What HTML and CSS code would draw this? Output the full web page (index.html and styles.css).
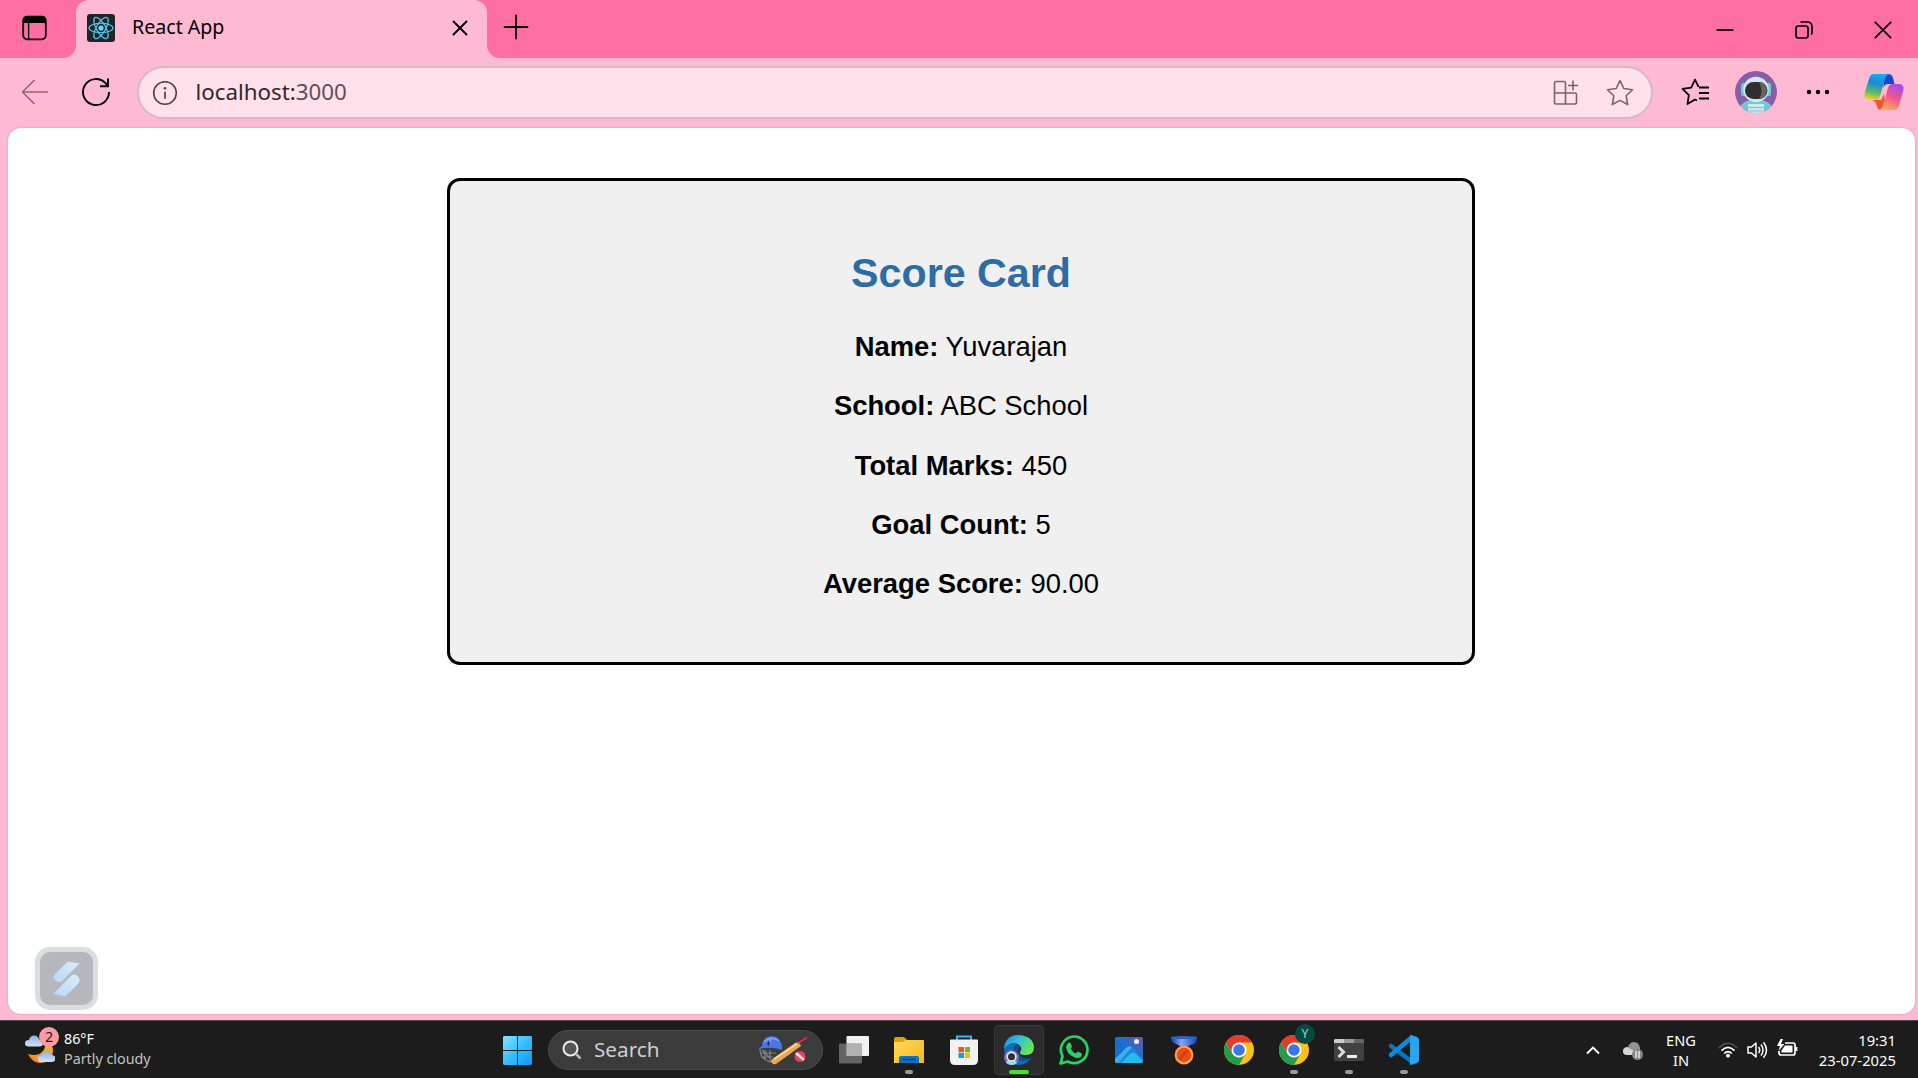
FILE: index.html
```html
<!DOCTYPE html>
<html lang="en">
<head>
<meta charset="utf-8">
<title>React App</title>
<link rel="stylesheet" href="styles.css">
</head>
<body>
<div class="desktop">
  <header class="tabstrip">
    <div class="tab-actions">
      <svg width="26" height="26" viewBox="0 0 26 26"><rect x="1.2" y="1.7" width="22.6" height="22.6" rx="4" fill="none" stroke="#000" stroke-width="1.8"/><path d="M1 8V5q0-4 4-4h15q4 0 4 4v3z"/><path d="M6.6 7v17" stroke="#000" stroke-width="1.4"/></svg>
    </div>
    <div class="tab">
      <svg class="favicon" width="28" height="28" viewBox="0 0 28 28"><rect width="28" height="28" rx="3" fill="#20232a"/><g fill="none" stroke="#53c1de" stroke-width="1.3"><ellipse cx="14" cy="14" rx="12" ry="4.6"/><ellipse cx="14" cy="14" rx="12" ry="4.6" transform="rotate(60 14 14)"/><ellipse cx="14" cy="14" rx="12" ry="4.6" transform="rotate(120 14 14)"/></g><circle cx="14" cy="14" r="2.6" fill="#61dafb"/></svg>
      <span class="tab-title">React App</span>
      <svg class="tab-close" width="16" height="16" viewBox="0 0 16 16"><path d="M1.5 1.5l13 13M14.5 1.5l-13 13" stroke="#000" stroke-width="1.9" stroke-linecap="round"/></svg>
    </div>
    <svg class="new-tab" width="26" height="26" viewBox="0 0 26 26"><path d="M13 1.5v23M1.5 13h23" stroke="#000" stroke-width="1.8" stroke-linecap="round"/></svg>
    <div class="window-controls">
      <svg width="18" height="18" viewBox="0 0 18 18"><path d="M.5 9h17" stroke="#000" stroke-width="1.8"/></svg>
      <svg width="18" height="18" viewBox="0 0 18 18"><g fill="none" stroke="#000" stroke-width="1.7"><rect x="1" y="5" width="12" height="12" rx="2.2"/><path d="M5.500 1H12q5 0 5 5v5.500q0 1-.8 2"/></g></svg>
      <svg width="18" height="18" viewBox="0 0 18 18"><path d="M.8.8l16.400 16.400M17.200.8L.8 17.200" stroke="#000" stroke-width="1.7"/></svg>
    </div>
  </header>

  <nav class="toolbar">
    <svg class="back" width="28" height="28" viewBox="0 0 28 28"><path d="M27 14H1.500M13.500 2L1.500 14l12 12" fill="none" stroke="#916878" stroke-width="1.600"/></svg>
    <svg class="reload" width="30" height="30" viewBox="0 0 30 30"><path d="M28 15A13 13 0 1 1 24.500 6.200L27 8.800M27 1.500v7.700h-8" fill="none" stroke="#000" stroke-width="1.900"/></svg>
    <div class="address">
      <svg width="26" height="26" viewBox="0 0 26 26"><circle cx="13" cy="13" r="11.300" fill="none" stroke="#4d4147" stroke-width="1.600"/><circle cx="13" cy="8.300" r="1.300" fill="#4d4147"/><path d="M13 11.800v7" stroke="#4d4147" stroke-width="1.700"/></svg>
      <span class="url">localhost:<span class="port">3000</span></span>
      <svg class="apps" width="26" height="26" viewBox="0 0 26 26"><g fill="none" stroke="#76666d" stroke-width="1.600"><path d="M3 1.500h8q1.500 0 1.500 1.500v10h9.500q1.500 0 1.500 1.500v8q0 1.500-1.500 1.500H3q-1.500 0-1.500-1.500V3q0-1.500 1.500-1.500zM1.500 13h11v11M20 .5v10M15 5.500h10"/></g></svg>
      <svg class="star" width="28" height="28" viewBox="0 0 28 28"><path d="M14 1.600l3.800 7.900 8.700 1.200-6.300 6.100 1.500 8.700-7.700-4.100-7.700 4.100 1.500-8.700-6.300-6.100 8.700-1.200z" fill="none" stroke="#76666d" stroke-width="1.600" stroke-linejoin="round"/></svg>
    </div>
    <svg class="favorites" width="29" height="28" viewBox="0 0 29 28"><path d="M16 22.500l-2-1-7.500 4.500 1.400-8.900-6.400-6.300 8.700-1.200L14 1.600l3.600 7.300M18 9.500h10M18 15h10M18 20.500h10" fill="none" stroke="#000" stroke-width="1.800" stroke-linejoin="round"/></svg>
    <svg class="avatar" width="42" height="42" viewBox="0 0 42 42"><defs><clipPath id="face"><circle cx="21" cy="21" r="21"/></clipPath></defs><g clip-path="url(#face)"><rect width="42" height="42" fill="#8560aa"/><path d="M4 42q0-11 12-13h10q12 2 12 13z" fill="#70c8d8"/><rect x="6" y="12" width="30" height="13" rx="2" fill="#70c8d8"/><circle cx="21" cy="18.500" r="12.800" fill="#cceaf0"/><rect x="10" y="11" width="22.500" height="17" rx="8.500" fill="#302f2e"/><path d="M24 11q7.800 0 7.800 8.500T24 28q5-8 0-17" fill="#686461"/><path d="M13 33h16v9H13z" fill="#cceaf0"/><path d="M13 36.500h16M13 40h16" stroke="#70c8d8"/></g></svg>
    <svg class="more" width="24" height="6" viewBox="0 0 24 6"><circle cx="3" cy="3" r="2.200"/><circle cx="12" cy="3" r="2.200"/><circle cx="21" cy="3" r="2.200"/></svg>
    <svg class="copilot" width="40" height="38" viewBox="0 0 40 38"><defs><linearGradient id="cp1" x1=".5" y1="0" x2=".3" y2="1"><stop offset="0" stop-color="#18a8ee"/><stop offset=".35" stop-color="#168ed4"/><stop offset=".7" stop-color="#5bb86a"/><stop offset="1" stop-color="#ffd21b"/></linearGradient><linearGradient id="cp2" x1=".7" y1="0" x2=".3" y2="1"><stop offset="0" stop-color="#a44cec"/><stop offset=".5" stop-color="#f2568d"/><stop offset="1" stop-color="#ffad55"/></linearGradient></defs><path d="M20 1h4q4 0 5 4l1.500 6h-6q-4 0-5 4z" fill="#1748c8"/><path d="M9 27h8l3-6 2 14-2 2h-3q-3 0-4-3l-1-4z" fill="#ed5935"/><path d="M10 1h15q-3 1-4 5l-5 17q-1 4-5 4H5q-6 0-4-8L5 6q1-5 5-5z" fill="url(#cp1)"/><path d="M30 37H15q3-1 4-5l5-17q1-4 5-4h6q6 0 4 8l-4 13q-1 5-5 5z" fill="url(#cp2)"/></svg>
  </nav>

  <main class="viewport">
    <section class="card">
      <h2>Score Card</h2>
      <p><b>Name:</b> Yuvarajan</p>
      <p><b>School:</b> ABC School</p>
      <p><b>Total Marks:</b> 450</p>
      <p><b>Goal Count:</b> 5</p>
      <p><b>Average Score:</b> 90.00</p>
    </section>
    <div class="floating">
      <svg width="27" height="36" viewBox="0 0 27 36"><defs><linearGradient id="fl" x1="1" y1="0" x2="0" y2="1"><stop offset="0" stop-color="#dcecfa"/><stop offset="1" stop-color="#b8d8f8"/></linearGradient></defs><path d="M15 .5l11.500 2L9 20q-3 2-6 0-4-3-1-7z" fill="url(#fl)"/><path d="M12 35.500l-11.500-3L18 15q3-3 6.500 0 4 4 0 8.500z" fill="url(#fl)"/></svg>
    </div>
  </main>

  <footer class="taskbar">
    <div class="weather">
      <div class="weather-icon">
        <svg width="30" height="30" viewBox="0 0 30 30"><defs><linearGradient id="moon" x2="0" y2="1"><stop offset="0" stop-color="#f2c52e"/><stop offset="1" stop-color="#f27c1e"/></linearGradient><linearGradient id="cloud" x2="0" y2="1"><stop offset="0" stop-color="#8daee8"/><stop offset="1" stop-color="#d2e2fb"/></linearGradient></defs><path d="M20 9q8 0 8 8 0 10-11 12-9 1-14-9 10 3 15-3 3-4 2-8z" fill="url(#moon)"/><path id="cl" d="M4 12.500q-4 0-4-3.200Q0 6 4 6q1-4.500 5-4.500t5 4q4 0 4 3.700 0 3.300-4 3.300z" fill="url(#cloud)"/><use href="#cl" x="12.500" y="15.500"/></svg>
        <span class="badge">2</span>
      </div>
      <div class="weather-text"><span>86°F</span><span class="dim">Partly cloudy</span></div>
    </div>

    <div class="apps-row">
      <div class="app start"><svg width="29" height="29" viewBox="0 0 29 29"><defs><linearGradient id="win" x2="1" y2="1"><stop offset="0" stop-color="#83e3ff"/><stop offset=".5" stop-color="#37bfff"/><stop offset="1" stop-color="#0f95f5"/></linearGradient></defs><path d="M1 0h13v14H0V1zM15 0h13l1 1v13H15zM0 15h14v14H1l-1-1zM15 15h14v13l-1 1H15z" fill="url(#win)"/></svg></div>
      <div class="search">
        <svg width="20" height="20" viewBox="0 0 20 20"><circle cx="8.500" cy="8.500" r="7" fill="#555" stroke="#ececec" stroke-width="2"/><path d="M13.500 13.500l5 5" stroke="#bbb" stroke-width="2.500"/></svg>
        <span>Search</span>
        <svg class="cricket" width="50" height="30" viewBox="0 0 50 30"><g fill="none" stroke="#85828f" stroke-width="1.200"><path d="M2 14q0 10 10 13l6-1 3-6M2 18h16M3 22h12M7 15v9M12 15v12M4 15l8 8"/></g><path d="M1 13l3-2Q5 1 14 1q9 1 10 11v3Q13 11 1 14z" fill="#4777e4"/><path d="M6 7q7-7 15-1M11 9l2-5" fill="none" stroke="#80a6fa" stroke-width="1.500"/><path d="M11 6.500l-1 4" stroke="#1c2b60" stroke-width="1.800"/><path d="M13 25L37 8q3-2 5 1l1 2-25 18q-5 1-5-4z" fill="#e9a653"/><path d="M16 24L39 9" stroke="#ffd194" stroke-width="2"/><path d="M40 8l9-5.500" stroke="#e52a4d" stroke-width="2"/><circle cx="42" cy="21.500" r="5.500" fill="#ed3e5b"/><path d="M38 18l8 7" stroke="#ffe0e8" stroke-width="2.500"/></svg>
      </div>
      <div class="app"><svg width="30" height="30" viewBox="0 0 30 30"><rect x="7.500" y="1" width="22.500" height="20" rx="1" fill="#f0f0f0"/><rect y="8.500" width="23" height="20" rx="1" fill="#777" fill-opacity=".8"/><path d="M7.500 8.500H22q1 0 1 1V21H7.500z" fill="#b2b2b2"/></svg></div>
      <div class="app open"><svg width="30" height="30" viewBox="0 0 30 30"><defs><linearGradient id="fold" x2="1" y2="1"><stop offset="0" stop-color="#ffdb64"/><stop offset="1" stop-color="#f9b713"/></linearGradient></defs><path d="M0 4q0-2 2-2h8l3 3v4H0z" fill="#dfa105"/><path d="M0 7h9l3-2h17q1 0 1 1v22H0z" fill="url(#fold)"/><path d="M5 28v-5q0-2 2-2h16q2 0 2 2v5z" fill="#0c72c8"/><path d="M8.500 24.500h13" stroke="#07427e" stroke-width="1.500"/></svg></div>
      <div class="app"><svg width="30" height="30" viewBox="0 0 30 30"><path d="M8 6V1.500h14V6" fill="none" stroke="#31b9f4" stroke-width="2"/><path d="M1 5.500q0-1 1-1h26q1 0 1 1V25q0 5-5 5H6q-5 0-5-5z" fill="#f2f2f2"/><path fill="#f25022" d="M9.500 12h5.500v5.300H9.500z"/><path fill="#7fba00" d="M16 12h5v5.300h-5z"/><path fill="#00a4ef" d="M9.500 18h5.500v5H9.500z"/><path fill="#ffb900" d="M16 18h5v5h-5z"/></svg></div>
      <div class="app open active"><svg width="30" height="30" viewBox="0 0 30 30"><defs><linearGradient id="edge" x2="1" y2=".5"><stop offset="0" stop-color="#158dd4"/><stop offset=".5" stop-color="#35bfd8"/><stop offset="1" stop-color="#67e650"/></linearGradient></defs><path d="M0 14Q1 0 15 0q14 1 15 12 0 8-8 8-7 0-6-3 3-4-1-7Q8 5 0 14z" fill="url(#edge)"/><path d="M0 14Q6 6 13 9q-5 4-3 11 4 9 17 3-4 7-13 7Q1 29 0 14z" fill="#0c6fbd"/><path d="M13 10q-6 5-3 11 5 8 17 3l1-1q-9 2-13-4-2-4 1-7z" fill="#124e93"/><circle cx="7.500" cy="22.500" r="7.500" fill="#896aad"/><path d="M2 28q0-3 5.500-3t5.500 3q-5 4-11 0z" fill="#94dce8"/><circle cx="7.500" cy="21.500" r="5.200" fill="#d4edf1"/><circle cx="7.500" cy="21.800" r="3.500" fill="#302d33"/></svg></div>
      <div class="app"><svg width="30" height="30" viewBox="0 0 30 30"><path d="M1.500 28.500l2-7.300A13.300 13.300 0 1 1 8.800 26.500z" fill="none" stroke="#25d366" stroke-width="2.700" stroke-linejoin="round"/><path d="M8 9.500q1.700-3 3.500-1.500l1.500 3.500-1.400 2.300q1.900 3.600 5.300 4.800l2-2 3.600 1.700q1 .6 0 2.700-2 3-6.200 1.800Q9 20 7.300 13.500q-.5-2 .7-4z" fill="#25d366"/></svg></div>
      <div class="app"><svg width="28" height="26" viewBox="0 0 28 26"><defs><linearGradient id="photo" x1="0" y1="1" x2="1" y2="0"><stop offset="0" stop-color="#126ad1"/><stop offset=".5" stop-color="#176fd0"/><stop offset="1" stop-color="#7155a5"/></linearGradient><linearGradient id="hill" x2="1" y2="1"><stop offset="0" stop-color="#58dcfa"/><stop offset="1" stop-color="#167fd4"/></linearGradient></defs><rect width="28" height="26" rx="2" fill="url(#photo)"/><path d="M0 25L12 11q3-3 6 0l10 12v1q0 2-2 2H2q-2 0-2-1z" fill="#2180e1"/><path d="M0 22L11 11q3-3 6-1L4 26H2q-2 0-2-2z" fill="url(#hill)"/><path d="M6 26l9-9q3-3 6 0l7 7-2 2z" fill="#22bdeb"/><circle cx="21.500" cy="4.500" r="2.500" fill="#e9f1ff"/></svg></div>
      <div class="app"><svg width="28" height="30" viewBox="0 0 28 30"><defs><linearGradient id="rib" x2="1"><stop offset="0" stop-color="#123c9c"/><stop offset=".4" stop-color="#88a6f8"/><stop offset="1" stop-color="#173fbc"/></linearGradient></defs><path d="M2 1.500h24q1 0 1 2 0 5-5 6l-5 2h-6l-6-3Q1 7 1 3 1 1.500 2 1.500z" fill="url(#rib)"/><path d="M1.500 3h25" stroke="#1768d9" stroke-width="2"/><circle cx="14" cy="20" r="8.300" fill="#e65111" stroke="#ff9b4e" stroke-width="2.200"/><path d="M9.500 24l8-8.500" stroke="#d0400f" stroke-width="3"/></svg></div>
      <div class="app"><svg width="30" height="30" viewBox="0 0 30 30"><g id="chrome"><circle cx="15" cy="15" r="15" fill="#fbc116"/><path d="M2 7.500A15 15 0 0 1 28 7.500H15L8.500 18.800z" fill="#e33b2e"/><path d="M2 7.500A15 15 0 0 0 15 30l6.500-11.200h-13z" fill="#249b50"/><circle cx="15" cy="15" r="7.500" fill="#fff"/><circle cx="15" cy="15" r="5.800" fill="#3b78e7"/></g></svg></div>
      <div class="app open"><svg width="30" height="30" viewBox="0 0 30 30"><use href="#chrome"/></svg><span class="profile">Y</span></div>
      <div class="app open"><svg width="30" height="22" viewBox="0 0 30 22"><rect width="30" height="22" rx="1.500" fill="#414141"/><path d="M1 0h9v4H0V1z" fill="#ccc"/><path d="M10 0h10v4H10z" fill="#9b9b9b"/><path d="M20 0h9l1 1v3H20z" fill="#666"/><path d="M4.500 8l5 5-5 5" fill="none" stroke="#ddd" stroke-width="3"/><path d="M13 17.500h10" stroke="#eee" stroke-width="3"/></svg></div>
      <div class="app open"><svg width="30" height="30" viewBox="0 0 30 30"><path d="M2 11L22 26" stroke="#0b73c3" stroke-width="4.500" stroke-linecap="round"/><path d="M2 20L22 3" stroke="#0e8bdd" stroke-width="4.500" stroke-linecap="round"/><path d="M22 0l6 2q2 1 2 3v20q0 2-2 3l-6 2q-1 0-1-1V1q0-1 1-1z" fill="#29a5f0"/></svg></div>
    </div>

    <div class="tray">
      <svg class="chevron" width="14" height="10" viewBox="0 0 14 10"><path d="M1 8.500l6-6 6 6" fill="none" stroke="#fff" stroke-width="1.900"/></svg>
      <svg class="onedrive" width="20" height="18" viewBox="0 0 20 18"><path d="M5 13q-5 0-5-4t5-4q2-5 6-5 5 0 6 6v7z" fill="#929292"/><path d="M4 13q-4 0-4-4 0-3 4-4l7 4 3-2v6z" fill="#d6d6d6"/><circle cx="14.500" cy="12.500" r="5.500" fill="#858585"/><path d="M13 9v7M16 9v7" stroke="#eee" stroke-width="1.400"/></svg>
      <div class="lang"><span>ENG</span><span>IN</span></div>
      <svg class="wifi" width="20" height="16" viewBox="0 0 20 16"><g fill="none" stroke="#fff" stroke-width="1.700"><path d="M.8 6.200Q10-3.700 19.200 6.200" stroke="#505050"/><path d="M3.500 8.700q6.500-6.500 13 0M6.200 11.500q3.800-3.800 7.600 0"/></g><circle cx="10" cy="13.700" r="1.900" fill="#fff"/></svg>
      <svg class="speaker" width="21" height="18" viewBox="0 0 21 18"><g fill="none" stroke="#fff" stroke-width="1.500"><path d="M1 6h3.500L9 2v14l-4.500-4H1z" stroke-linejoin="round"/><path d="M11.500 6q2.500 3 0 6M14 3.500q4 5.500 0 11M16.500 1.200q6 7.800 0 15.600"/></g></svg>
      <svg class="battery" width="21" height="18" viewBox="0 0 21 18"><path d="M8 4h8q2 0 2 2v8q0 2-2 2H4q-2 0-2-2v-2M19.500 8v4" fill="none" stroke="#fff" stroke-width="1.700"/><path d="M8 6.500h7.500v7h-11v-2z" fill="#fff"/><path d="M3.500 0L0 7h3L1.500 12 7.500 5H4L6 0z" fill="#fff"/></svg>
      <div class="clock"><span>19:31</span><span>23-07-2025</span></div>
    </div>
  </footer>
</div>
</body>
</html>
```
FILE: styles.css
```css
* { box-sizing: border-box; }

body {
  margin: 0;
  overflow: hidden;
  font-family: "Noto Sans", sans-serif;
}

svg { display: block; flex: none; }

.desktop {
  display: flex;
  flex-direction: column;
  width: 1918px;
  height: 1078px;
  background: #febad2;
}

/* Tab strip: the lower half is toolbar pink so the inverted corners show it */
.tabstrip {
  display: flex;
  flex: none;
  height: 58px;
  background: linear-gradient(#ff6fa1 0 30px, #febad2 30px);
}

.tab-actions {
  width: 76px;
  padding: 15px 0 0 22px;
  background: #ff6fa1;
  border-bottom-right-radius: 13px;
}

.tab {
  display: flex;
  align-items: center;
  width: 411px;
  height: 56px;
  padding: 0 19px 0 11px;
  background: #febad2;
  border-radius: 13px 13px 0 0;
}

.tab-title {
  margin: -3px auto 0 17px;
  font-size: 19.6px;
  white-space: nowrap;
}

.new-tab {
  width: 58px;
  height: 58px;
  padding: 14px 16px 18px;
  background: #ff6fa1;
  border-bottom-left-radius: 13px;
}

.window-controls {
  display: flex;
  flex: 1;
  justify-content: flex-end;
  gap: 61px;
  padding: 20.5px 26.5px 0 0;
  background: #ff6fa1;
}

/* Toolbar */
.toolbar {
  display: flex;
  flex: none;
  align-items: center;
  height: 70px;
  padding: 0 14px 2px 21px;
}

.reload { margin-left: 31.5px; }

.address {
  display: flex;
  align-items: center;
  width: 1516px;
  height: 53px;
  margin: 0 0 0 26.5px;
  padding: 1px 17px 0 12.5px;
  background: #ffe1eb;
  border: 2px solid #d9b8c5;
  border-radius: 27px;
}

.url {
  margin: -3px auto 0 18px;
  font-size: 22.3px;
  color: #30282c;
}

.port { color: #5c4f55; }
.star { margin-left: 27px; }
.favorites { margin-left: 28px; }
.avatar { margin-left: 25px; }
.more { margin-left: 29px; }
.copilot { margin-left: auto; }

/* Page */
.viewport {
  position: relative;
  flex: none;
  width: 1907px;
  height: 886px;
  margin-left: 8px;
  padding-top: 50px;
  background: #fff;
  border-radius: 13px;
  box-shadow: 0 0 2px #c98fa5;
}

.card {
  width: 1028px;
  height: 487px;
  margin-left: 439px;
  padding-top: 63px;
  background: #f0f0f0;
  border: 3px solid #000;
  border-radius: 13px;
  font-family: "Liberation Sans", Arial, sans-serif;
  text-align: center;
}

.card h2 {
  margin: 0 0 15px;
  font-size: 41.2px;
  line-height: 58px;
  color: #2d6ca5;
}

.card p {
  margin: 0;
  font-size: 27.4px;
  line-height: 59.25px;
}

.floating {
  position: absolute;
  left: 27px;
  bottom: 4px;
  display: grid;
  place-items: center;
  width: 63px;
  height: 63px;
  background: #b7b8be;
  border: 5px solid #dcdde1;
  border-radius: 15px;
}

/* Taskbar */
.taskbar {
  display: flex;
  flex: none;
  height: 58px;
  margin-top: 6px;
  background: #1c1c1c;
  border-top: 1px solid #484848;
  color: #fff;
  font-size: 14.6px;
  line-height: 20px;
}

.weather {
  display: flex;
  width: 492px;
  padding: 8px 0 0 25px;
  font-size: 14.3px;
}

.weather-icon {
  position: relative;
  width: 39px;
  padding-top: 5px;
}

.badge {
  position: absolute;
  left: 14px;
  top: -2px;
  width: 20px;
  height: 20px;
  border-radius: 50%;
  background: #ff99a4;
  color: #222;
  text-align: center;
}

.weather-text, .lang, .clock {
  display: flex;
  flex-direction: column;
  white-space: nowrap;
}

.dim { color: #c2c2c2; }

.apps-row {
  display: flex;
  gap: 5px;
  padding-top: 4px;
}

.app {
  position: relative;
  display: grid;
  place-items: center;
  width: 50px;
  height: 50px;
  border-radius: 5px;
}

.app.open::after {
  content: "";
  position: absolute;
  left: 21px;
  bottom: 1px;
  width: 8px;
  height: 4px;
  border-radius: 2px;
  background: #9a9a9a;
}

.app.active {
  background: #2b2b2b;
  box-shadow: inset 0 0 0 1px #383838;
}

.app.active::after {
  left: 15px;
  width: 20px;
  background: #46e22e;
}

.search {
  display: flex;
  align-items: center;
  width: 275px;
  height: 40px;
  margin: 5px 1px 0;
  padding: 0 14px 0 13px;
  background: #3b3b3b;
  border: 1px solid #4b4b4b;
  border-radius: 20px;
}

.search span {
  margin: -2px auto 0 12px;
  font-size: 20.7px;
  color: #cfcfcf;
}

.profile {
  position: absolute;
  left: 26px;
  top: -1px;
  width: 20px;
  height: 20px;
  border-radius: 50%;
  background: #05493f;
  color: #b5d0ca;
  font-size: 12px;
  text-align: center;
}

.tray {
  display: flex;
  flex: 1;
  align-items: center;
  justify-content: flex-end;
  padding: 0 22px 0 0;
}

.onedrive { margin: 3px 0 0 23px; }
.lang { align-items: center; width: 40px; margin-left: 18px; }
.wifi { margin-left: 17px; }
.speaker { margin-left: 9px; }
.battery { margin: -3px 0 0 9px; }
.clock { align-items: flex-end; width: 98px; font-size: 14.8px; }
```
